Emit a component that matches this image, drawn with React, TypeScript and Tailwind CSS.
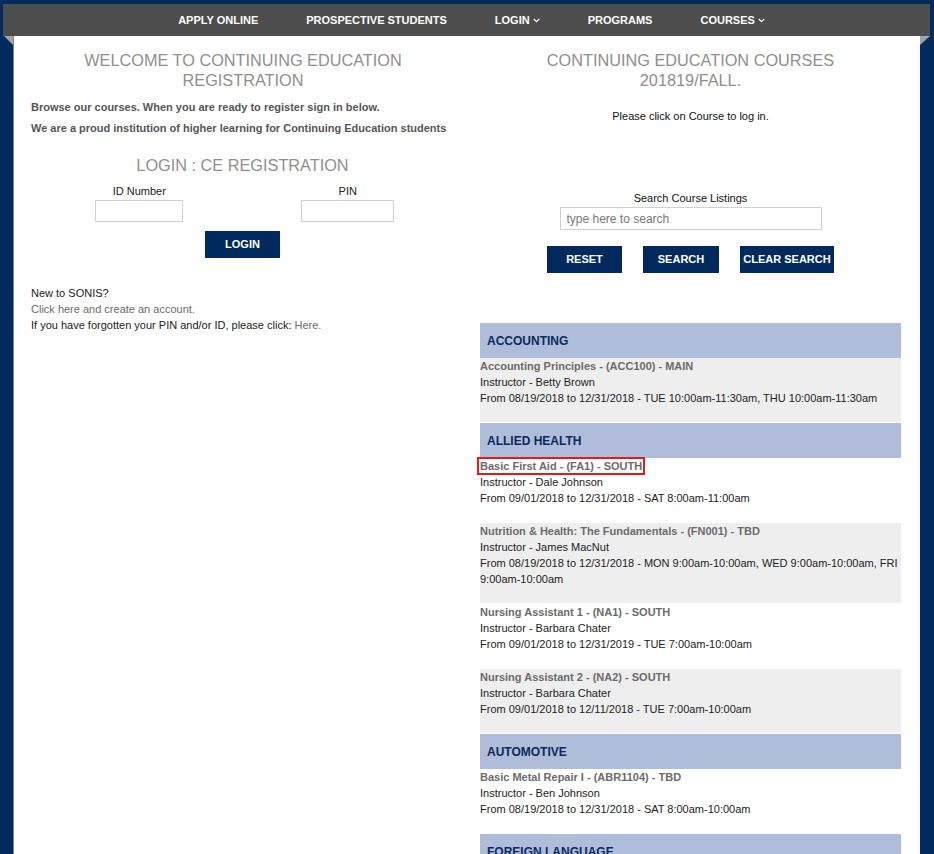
import React from 'react';

type Course = {
  title: string;
  instructor: string;
  when: string;
  flagged?: boolean;
};

type Category = {
  name: string;
  courses: Course[];
};

const NAV_ITEMS = [
  { label: 'APPLY ONLINE' },
  { label: 'PROSPECTIVE STUDENTS' },
  { label: 'LOGIN', caret: true },
  { label: 'PROGRAMS' },
  { label: 'COURSES', caret: true },
];

const CATEGORIES: Category[] = [
  {
    name: 'ACCOUNTING',
    courses: [
      {
        title: 'Accounting Principles - (ACC100) - MAIN',
        instructor: 'Instructor - Betty Brown',
        when: 'From 08/19/2018 to 12/31/2018 - TUE 10:00am-11:30am, THU 10:00am-11:30am',
      },
    ],
  },
  {
    name: 'ALLIED HEALTH',
    courses: [
      {
        title: 'Basic First Aid - (FA1) - SOUTH',
        instructor: 'Instructor - Dale Johnson',
        when: 'From 09/01/2018 to 12/31/2018 - SAT 8:00am-11:00am',
        flagged: true,
      },
      {
        title: 'Nutrition & Health: The Fundamentals - (FN001) - TBD',
        instructor: 'Instructor - James MacNut',
        when: 'From 08/19/2018 to 12/31/2018 - MON 9:00am-10:00am, WED 9:00am-10:00am, FRI 9:00am-10:00am',
      },
      {
        title: 'Nursing Assistant 1 - (NA1) - SOUTH',
        instructor: 'Instructor - Barbara Chater',
        when: 'From 09/01/2018 to 12/31/2019 - TUE 7:00am-10:00am',
      },
      {
        title: 'Nursing Assistant 2 - (NA2) - SOUTH',
        instructor: 'Instructor - Barbara Chater',
        when: 'From 09/01/2018 to 12/11/2018 - TUE 7:00am-10:00am',
      },
    ],
  },
  {
    name: 'AUTOMOTIVE',
    courses: [
      {
        title: 'Basic Metal Repair I - (ABR1104) - TBD',
        instructor: 'Instructor - Ben Johnson',
        when: 'From 08/19/2018 to 12/31/2018 - SAT 8:00am-10:00am',
      },
    ],
  },
  {
    name: 'FOREIGN LANGUAGE',
    courses: [
      {
        title: 'Conversational Spanish I - (SPN101) - MAIN',
        instructor: 'Instructor - Maria Lopez',
        when: 'From 09/01/2018 to 12/31/2018 - MON 6:00pm-8:00pm',
      },
      {
        title: 'Conversational French I - (FRN101) - MAIN',
        instructor: 'Instructor - Paul Martin',
        when: 'From 09/01/2018 to 12/31/2018 - WED 6:00pm-8:00pm',
      },
    ],
  },
];

function Caret() {
  return (
    <svg width="7" height="5" viewBox="0 0 7 5" className="ml-[3px] mt-[1px]">
      <path d="M0.8 1 L3.5 3.6 L6.2 1" fill="none" stroke="#fff" strokeWidth="1.3" />
    </svg>
  );
}

function NavBar() {
  return (
    <div className="relative">
      <nav className="flex h-[32px] items-center justify-center bg-[#4d4d4d] pl-[10px]">
        {NAV_ITEMS.map((item) => (
          <a
            key={item.label}
            className="flex items-center px-[24px] text-[11px] font-bold text-white"
          >
            {item.label}
            {item.caret && <Caret />}
          </a>
        ))}
      </nav>
      {/* folded ribbon corners */}
      <span className="absolute left-[1px] top-[32px] h-0 w-0 border-l-[9px] border-t-[9px] border-l-transparent border-t-[#a3a3a3]" />
      <span className="absolute right-[0px] top-[32px] h-0 w-0 border-r-[10px] border-t-[9px] border-r-transparent border-t-[#a3a3a3]" />
    </div>
  );
}

function NavyButton({ label, width }: { label: string; width: string }) {
  return (
    <button
      className={`h-[27px] ${width} bg-[#002a5e] text-[11px] font-bold text-white`}
    >
      {label}
    </button>
  );
}

function LoginPanel() {
  return (
    <div className="pl-[17px] pr-[18px]">
      <h2 className="mt-[14px] pl-[6px] text-center text-[16.3px] leading-[20px] text-[#8f8f8f]">
        WELCOME TO CONTINUING EDUCATION
        <br />
        REGISTRATION
      </h2>
      <p className="mt-[9px] text-[11px] font-bold leading-[16px] text-[#555]">
        Browse our courses. When you are ready to register sign in below.
      </p>
      <p className="mt-[5px] text-[11px] font-bold leading-[16px] text-[#555]">
        We are a proud institution of higher learning for Continuing Education students
      </p>

      <div className="pl-[5px]">
        <h2 className="mt-[19px] text-center text-[16.3px] leading-[20px] text-[#8f8f8f]">
          LOGIN : CE REGISTRATION
        </h2>

        <div className="mt-[8px] grid grid-cols-2 text-[11px] leading-[16px] text-[#222]">
          <div className="flex flex-col items-center">
            <label>ID Number</label>
            <input className="mt-[1px] h-[22px] w-[88px] border border-[#d0d0d0] outline-none" />
          </div>
          <div className="flex flex-col items-center pl-[4px]">
            <label>PIN</label>
            <input
              type="password"
              className="mt-[1px] h-[22px] w-[93px] border border-[#d0d0d0] outline-none"
            />
          </div>
        </div>

        <div className="mt-[9px] flex justify-center">
          <NavyButton label="LOGIN" width="w-[75px]" />
        </div>
      </div>

      <div className="mt-[27px] text-[11px] leading-[16px] text-[#222]">
        <p>New to SONIS?</p>
        <p>
          <a className="text-[#6b6b6b]">Click here and create an account.</a>
        </p>
        <p>
          If you have forgotten your PIN and/or ID, please click:{' '}
          <a className="text-[#6b6b6b]">Here.</a>
        </p>
      </div>
    </div>
  );
}

function CourseList() {
  let row = 0;
  return (
    <div className="mt-[50px]">
      {CATEGORIES.map((cat) => (
        <div key={cat.name}>
          <div className="flex h-[35px] items-center bg-[#afbdda] pl-[7px] text-[12px] font-bold text-[#0b2a5c]">
            {cat.name}
          </div>
          {cat.courses.map((c) => {
            const shaded = row++ % 2 === 0;
            return (
              <div
                key={c.title}
                className={`mb-[1px] pb-[16px] text-[11px] leading-[16px] text-[#222] ${
                  shaded ? 'bg-[#eeeeee]' : 'bg-white'
                }`}
              >
                <p>
                  <a
                    className={`font-bold text-[#6b6b6b] ${
                      c.flagged ? 'outline-2 outline-offset-[1px] outline-[#e31a1c] outline-solid' : ''
                    }`}
                  >
                    {c.title}
                  </a>
                </p>
                <p>{c.instructor}</p>
                <p>{c.when}</p>
              </div>
            );
          })}
        </div>
      ))}
    </div>
  );
}

function CoursePanel() {
  return (
    <div className="pl-[13px] pr-[19px]">
      <h2 className="mt-[14px] text-center text-[16.3px] leading-[20px] text-[#8f8f8f]">
        CONTINUING EDUCATION COURSES
        <br />
        201819/FALL.
      </h2>
      <p className="mt-[18px] text-center text-[11px] leading-[16px] text-[#111]">
        Please click on Course to log in.
      </p>

      <div className="mt-[66px] flex flex-col items-center">
        <label className="text-[11px] leading-[16px] text-[#111]">Search Course Listings</label>
        <input
          placeholder="type here to search"
          className="mt-[1px] h-[23px] w-[262px] border border-[#d0d0d0] px-[6px] text-[12px] outline-none placeholder:text-[#777]"
        />
        <div className="mt-[16px] flex gap-[21px]">
          <NavyButton label="RESET" width="w-[75px]" />
          <NavyButton label="SEARCH" width="w-[76px]" />
          <NavyButton label="CLEAR SEARCH" width="w-[94px]" />
        </div>
      </div>

      <CourseList />
    </div>
  );
}

export default function App() {
  return (
    <div className="min-h-screen bg-[#012a5e] pl-[3px] pr-[4px] pt-[4px] font-['Liberation_Sans',Arial,sans-serif]">
      <NavBar />
      <main className="mx-[10px] grid min-h-[900px] grid-cols-2 border-l border-[#6d85ad] bg-white pb-[40px]">
        <LoginPanel />
        <CoursePanel />
      </main>
    </div>
  );
}
